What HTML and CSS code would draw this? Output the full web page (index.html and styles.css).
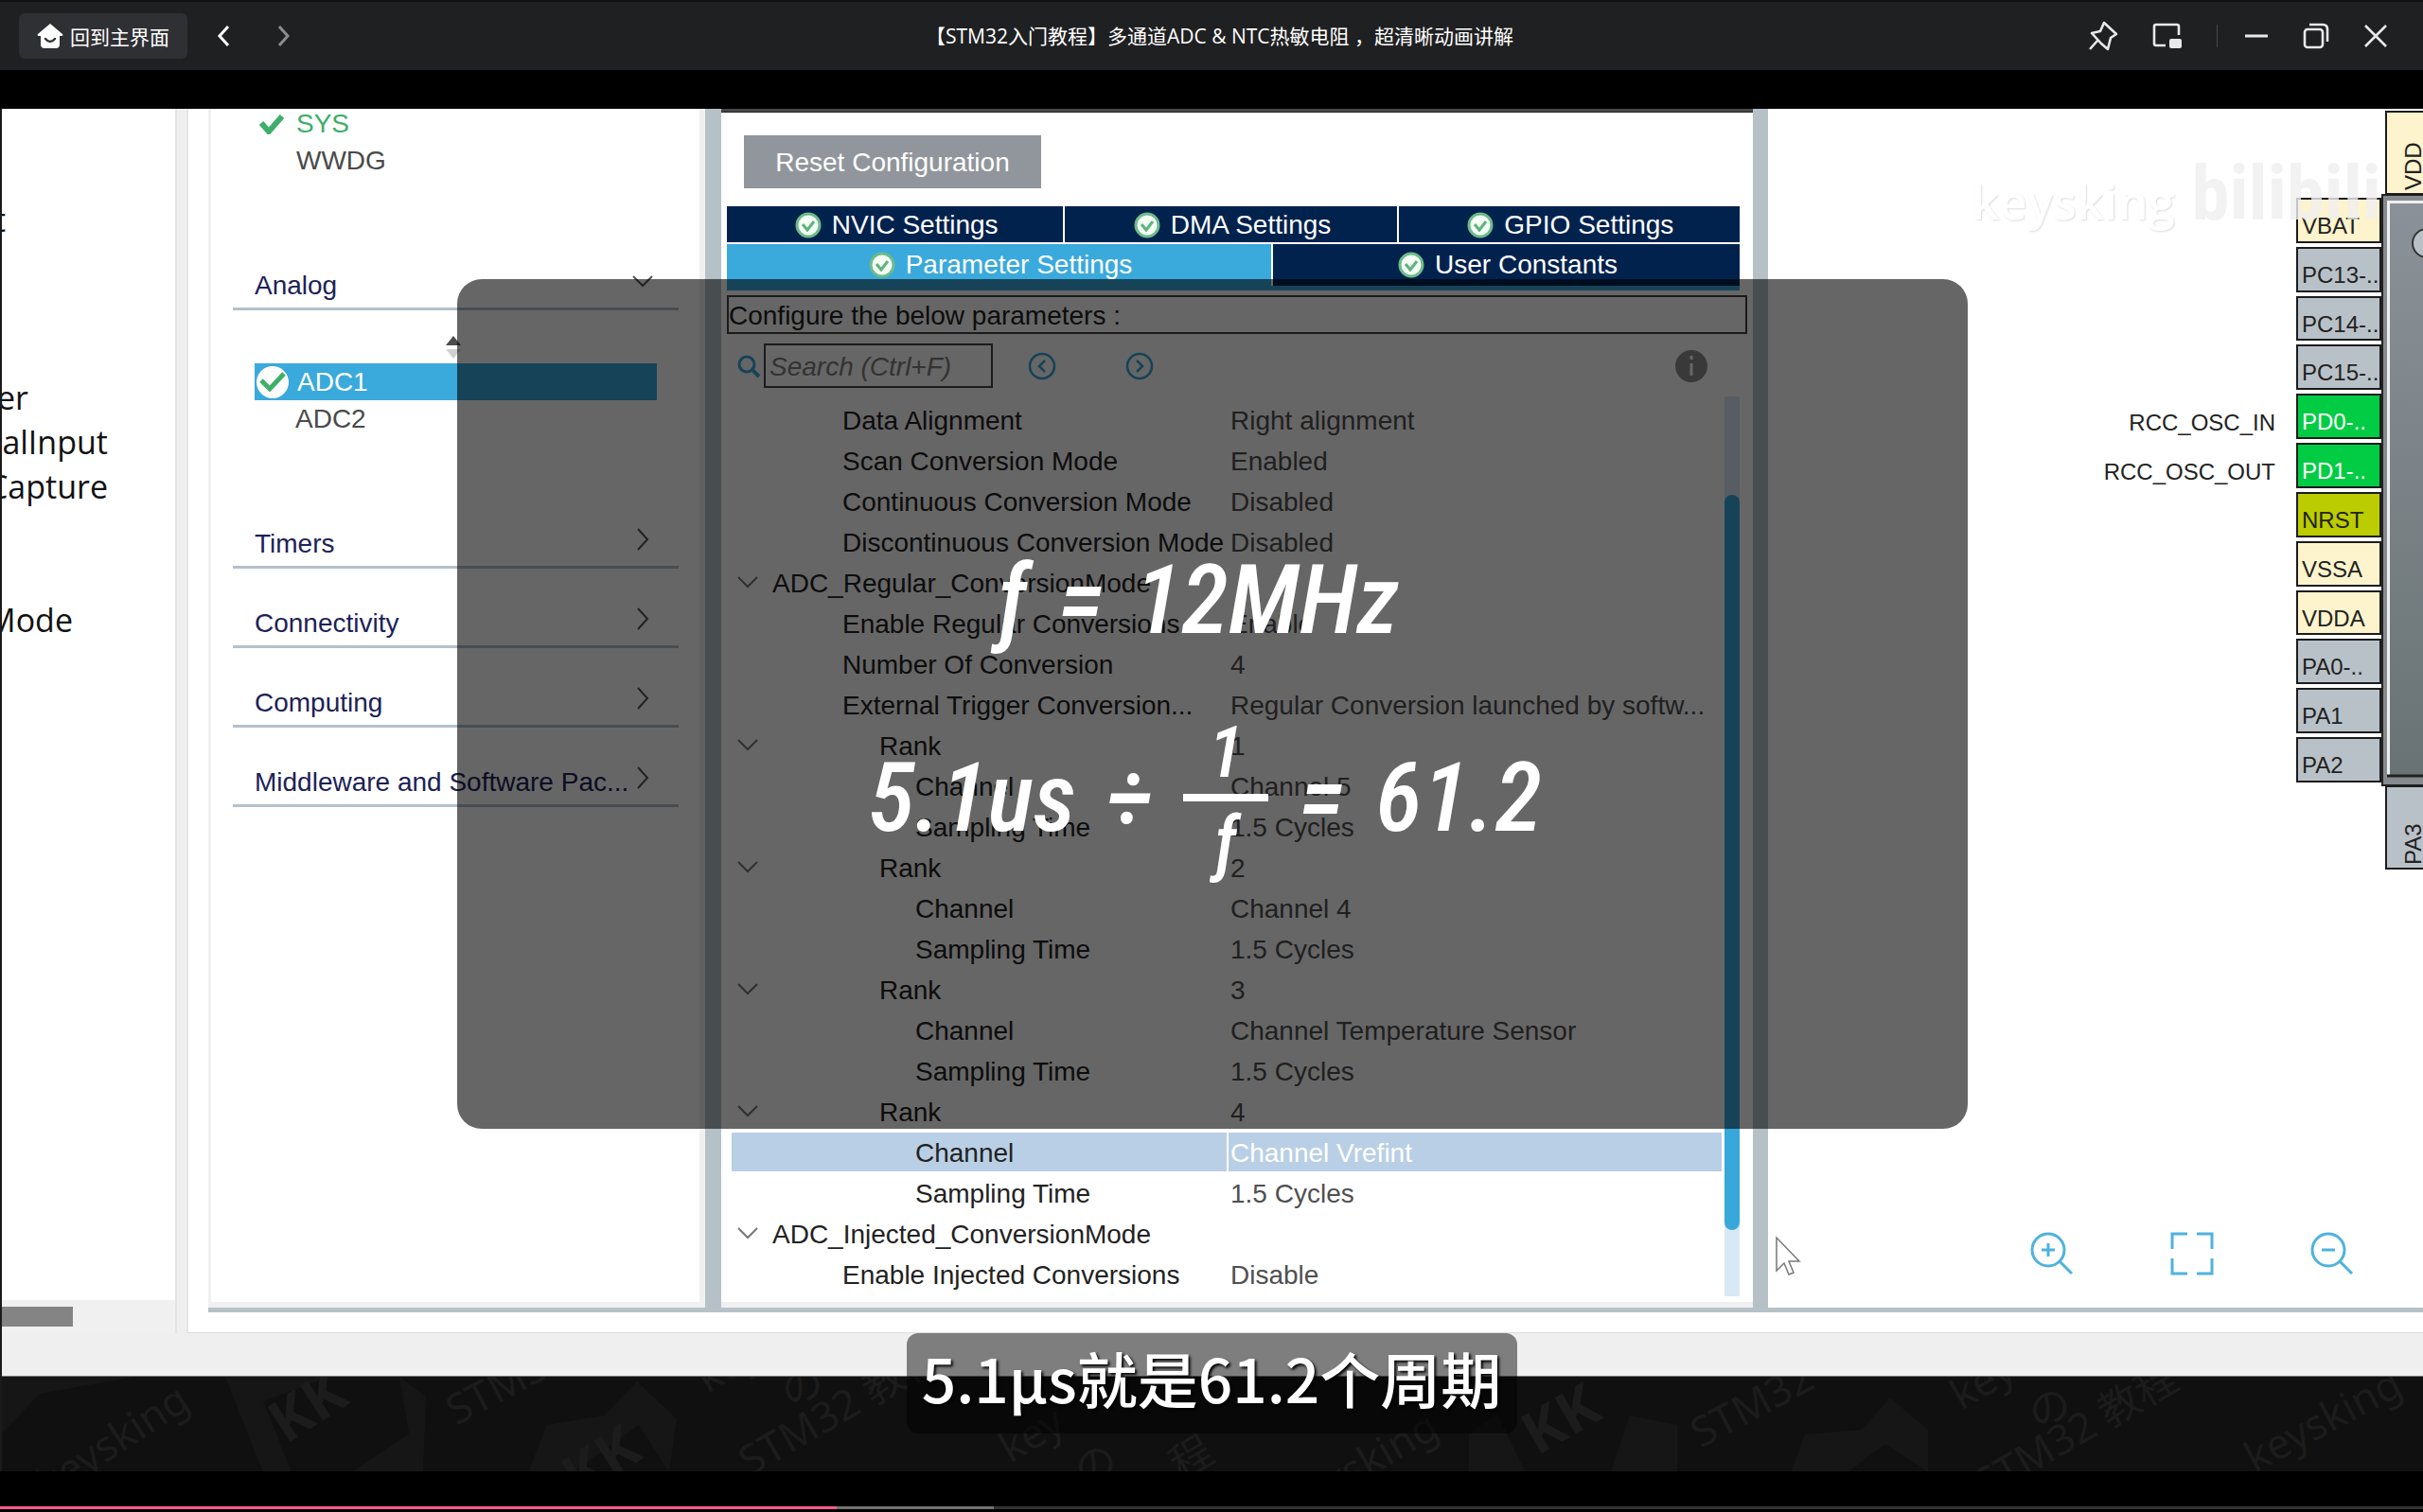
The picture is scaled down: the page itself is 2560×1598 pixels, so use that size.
FILE: index.html
```html
<!DOCTYPE html>
<html lang="zh-CN">
<head>
<meta charset="utf-8">
<title>【STM32入门教程】多通道ADC &amp; NTC热敏电阻</title>
<link rel="stylesheet" href="styles.css">
</head>
<body>
<svg class="defs" aria-hidden="true">
  <symbol id="down" viewBox="0 0 24 14"><path d="M2 2l10 10L22 2" fill="none" stroke="currentColor" stroke-width="2"/></symbol>
  <symbol id="right" viewBox="0 0 14 24"><path d="M2 1l10 11L2 23" fill="none" stroke="currentColor" stroke-width="2"/></symbol>
  <symbol id="ok" viewBox="0 0 28 28"><circle cx="14" cy="14" r="12" fill="#f4fff4" stroke="#6dbb8b" stroke-width="3"/><path d="M8 13l5 6 7-9" fill="none" stroke="#5fb37e" stroke-width="3"/></symbol>
  <symbol id="tick" viewBox="0 0 28 22"><path d="M3 10l8 9L25 3" fill="none" stroke="#3fae6b" stroke-width="6"/></symbol>
</svg>

<header class="titlebar">
  <div class="nav">
    <button class="home" type="button">
      <svg width="28" height="28" viewBox="0 0 28 28"><path d="M14 1L1 12c-1 1 0 2 1 2h2v9q0 4 4 4h12q4 0 4-4v-9h2c1 0 2-1 1-2z" fill="#fff"/><path d="M9 17q5 6 10 0" fill="none" stroke="#2f3034" stroke-width="2.5" stroke-linecap="round"/></svg>
      回到主界面
    </button>
    <button class="icon-button" type="button" aria-label="后退"><svg width="14" height="22" viewBox="0 0 14 22"><path d="M12 1L3 11l9 10" fill="none" stroke="#fff" stroke-width="3"/></svg></button>
    <button class="icon-button" type="button" aria-label="前进"><svg width="14" height="22" viewBox="0 0 14 22"><path d="M2 1l9 10-9 10" fill="none" stroke="#8b8c8e" stroke-width="3"/></svg></button>
  </div>
  <h1>【STM32入门教程】多通道ADC &amp; NTC热敏电阻 ，超清晰动画讲解</h1>
  <div class="window-buttons">
    <button class="icon-button" type="button" aria-label="置顶"><svg width="32" height="32" viewBox="0 0 32 32"><path d="M17 2l13 12-6 4-3 12-7-6-10-11 9-2zM10 21L2 30" fill="none" stroke="#e8e9ea" stroke-width="2.6" stroke-linejoin="round"/></svg></button>
    <button class="icon-button" type="button" aria-label="小窗"><svg width="32" height="28" viewBox="0 0 32 28"><path d="M14 24H4q-2 0-2-2V4q0-2 2-2h22q2 0 2 2v9" fill="none" stroke="#e8e9ea" stroke-width="2.6"/><rect x="18" y="17" width="13" height="10" rx="2" fill="#e8e9ea"/></svg></button>
    <span class="separator"></span>
    <button class="icon-button" type="button" aria-label="最小化"><svg width="26" height="28" viewBox="0 0 26 28"><path d="M1 14h24" stroke="#e8e9ea" stroke-width="3"/></svg></button>
    <button class="icon-button" type="button" aria-label="还原"><svg width="28" height="28" viewBox="0 0 28 28"><rect x="2" y="7" width="19" height="19" rx="3" fill="none" stroke="#e8e9ea" stroke-width="2.6"/><path d="M7 2h14q5 0 5 5v13" fill="none" stroke="#e8e9ea" stroke-width="2.6"/></svg></button>
    <button class="icon-button" type="button" aria-label="关闭"><svg width="26" height="26" viewBox="0 0 26 26"><path d="M2 2l22 22M24 2L2 24" stroke="#e8e9ea" stroke-width="2.6"/></svg></button>
  </div>
</header>

<main class="player">
  <section class="video">
    <div class="desktop">
      <aside class="listing">
        <div class="listing-text">
          <p class="cut-t">t</p><p></p><p></p><p></p>
          <p class="cut-er">er</p><p class="cut-input">alInput</p><p class="cut-capture">Capture</p><p></p><p></p><p class="cut-mode">Mode</p>
        </div>
        <div class="listing-scroll"><span></span></div>
      </aside>

      <div class="ide">
        <div class="ide-panes">
          <nav class="tree">
            <ul class="system">
              <li class="enabled"><svg width="28" height="22"><use href="#tick"/></svg>SYS</li>
              <li>WWDG</li>
            </ul>
            <button class="category analog" type="button">Analog<svg class="down" width="24" height="14"><use href="#down"/></svg></button>
            <svg class="sorter" width="18" height="24" viewBox="0 0 18 24"><path d="M1 10l8-10 8 10z" fill="#4c4c4c"/><path d="M1 14l8 10 8-10z" fill="#d0d0d0"/></svg>
            <ul class="adc">
              <li class="selected"><svg width="36" height="36" viewBox="0 0 36 36"><circle cx="18" cy="18" r="17" fill="#fff"/><path d="M6 16l9 9L30 9" fill="none" stroke="#3fae6b" stroke-width="5"/></svg>ADC1</li>
              <li>ADC2</li>
            </ul>
            <button class="category" type="button">Timers<svg width="14" height="24"><use href="#right"/></svg></button>
            <button class="category" type="button">Connectivity<svg width="14" height="24"><use href="#right"/></svg></button>
            <button class="category" type="button">Computing<svg width="14" height="24"><use href="#right"/></svg></button>
            <button class="category" type="button">Middleware and Software Pac...<svg width="14" height="24"><use href="#right"/></svg></button>
          </nav>

          <section class="config">
            <div class="config-head"></div>
            <button class="reset" type="button">Reset Configuration</button>
            <div class="tabs upper">
              <button type="button"><svg width="28" height="28"><use href="#ok"/></svg>NVIC Settings</button>
              <button type="button"><svg width="28" height="28"><use href="#ok"/></svg>DMA Settings</button>
              <button type="button"><svg width="28" height="28"><use href="#ok"/></svg>GPIO Settings</button>
            </div>
            <div class="tabs lower">
              <button class="active" type="button"><svg width="28" height="28"><use href="#ok"/></svg>Parameter Settings</button>
              <button type="button"><svg width="28" height="28"><use href="#ok"/></svg>User Constants</button>
            </div>
            <p class="hint">Configure the below parameters :</p>
            <div class="search">
              <label for="find"><svg width="26" height="26" viewBox="0 0 26 26"><circle cx="11" cy="11" r="8" fill="none" stroke="#38a8da" stroke-width="3"/><path d="M17 17l7 7" stroke="#38a8da" stroke-width="4"/></svg></label>
              <input id="find" type="text" placeholder="Search (Ctrl+F)">
              <button class="icon-button" type="button" aria-label="Previous"><svg width="30" height="30" viewBox="0 0 30 30" fill="none" stroke="#38a8da" stroke-width="2.6"><circle cx="15" cy="15" r="13"/><path d="M18 9l-6 6 6 6"/></svg></button>
              <button class="icon-button" type="button" aria-label="Next"><svg width="30" height="30" viewBox="0 0 30 30" fill="none" stroke="#38a8da" stroke-width="2.6"><circle cx="15" cy="15" r="13"/><path d="M12 9l6 6-6 6"/></svg></button>
              <button class="icon-button info" type="button" aria-label="Information"><svg width="34" height="34" viewBox="0 0 34 34"><circle cx="17" cy="17" r="17" fill="#8f8f8f"/><path d="M17 14v13M17 6v4" stroke="#fff" stroke-width="3"/></svg></button>
            </div>
            <div class="params">
              <table>
                <tbody>
                <tr><th class="item">Data Alignment</th><td>Right alignment</td></tr>
                <tr><th class="item">Scan Conversion Mode</th><td>Enabled</td></tr>
                <tr><th class="item">Continuous Conversion Mode</th><td>Disabled</td></tr>
                <tr><th class="item">Discontinuous Conversion Mode</th><td>Disabled</td></tr>
                <tr><th class="group"><svg width="24" height="14"><use href="#down"/></svg>ADC_Regular_ConversionMode</th><td></td></tr>
                <tr><th class="item">Enable Regular Conversions</th><td>Enable</td></tr>
                <tr><th class="item">Number Of Conversion</th><td>4</td></tr>
                <tr><th class="item">External Trigger Conversion...</th><td>Regular Conversion launched by softw...</td></tr>
                <tr><th class="rank"><svg width="24" height="14"><use href="#down"/></svg>Rank</th><td>1</td></tr>
                <tr><th class="leaf">Channel</th><td>Channel 5</td></tr>
                <tr><th class="leaf">Sampling Time</th><td>1.5 Cycles</td></tr>
                <tr><th class="rank"><svg width="24" height="14"><use href="#down"/></svg>Rank</th><td>2</td></tr>
                <tr><th class="leaf">Channel</th><td>Channel 4</td></tr>
                <tr><th class="leaf">Sampling Time</th><td>1.5 Cycles</td></tr>
                <tr><th class="rank"><svg width="24" height="14"><use href="#down"/></svg>Rank</th><td>3</td></tr>
                <tr><th class="leaf">Channel</th><td>Channel Temperature Sensor</td></tr>
                <tr><th class="leaf">Sampling Time</th><td>1.5 Cycles</td></tr>
                <tr><th class="rank"><svg width="24" height="14"><use href="#down"/></svg>Rank</th><td>4</td></tr>
                <tr class="current"><th class="leaf">Channel</th><td>Channel Vrefint</td></tr>
                <tr><th class="leaf">Sampling Time</th><td>1.5 Cycles</td></tr>
                <tr><th class="group"><svg width="24" height="14"><use href="#down"/></svg>ADC_Injected_ConversionMode</th><td></td></tr>
                <tr><th class="item">Enable Injected Conversions</th><td>Disable</td></tr>
                </tbody>
              </table>
              <div class="scrollbar"><span></span></div>
            </div>
          </section>

          <section class="pinout">
            <div class="chip"><svg width="46" height="626" viewBox="0 0 46 626"><defs><linearGradient id="body" x1="0" y1="0" x2="0" y2="1"><stop offset="0" stop-color="#8b9198"/><stop offset="1" stop-color="#697375"/></linearGradient></defs><rect width="60" height="626" fill="#222"/><rect x="2" y="2" width="60" height="622" fill="#858a8f"/><rect x="6" y="7" width="60" height="608" fill="#eee"/><rect x="9" y="10" width="60" height="604" fill="url(#body)"/><path d="M6 615h40" stroke="#222" stroke-width="3"/><circle cx="48" cy="52" r="15" fill="#b9c1c7" stroke="#333" stroke-width="2"/></svg></div>
            <div class="pin-top">VDD</div>
            <div class="pin-bottom">PA3</div>
            <div class="pins">
              <span></span><b class="power">VBAT</b>
              <span></span><b>PC13-..</b>
              <span></span><b>PC14-..</b>
              <span></span><b>PC15-..</b>
              <span>RCC_OSC_IN</span><b class="used">PD0-..</b>
              <span>RCC_OSC_OUT</span><b class="used">PD1-..</b>
              <span></span><b class="reset-pin">NRST</b>
              <span></span><b class="power">VSSA</b>
              <span></span><b class="power">VDDA</b>
              <span></span><b>PA0-..</b>
              <span></span><b>PA1</b>
              <span></span><b>PA2</b>
            </div>
            <div class="zoom">
              <button class="icon-button" type="button" aria-label="Zoom in"><svg width="46" height="46" viewBox="0 0 46 46" fill="none" stroke="#4fb2dc" stroke-width="3"><circle cx="19" cy="19" r="17"/><path d="M31 31l13 13M12 19h14M19 12v14"/></svg></button>
              <button class="icon-button" type="button" aria-label="Fit"><svg width="46" height="46" viewBox="0 0 46 46" fill="none" stroke="#4fb2dc" stroke-width="3"><path d="M2 18V2h16M28 2h16v16M44 28v16H28M18 44H2V28"/></svg></button>
              <button class="icon-button" type="button" aria-label="Zoom out"><svg width="46" height="46" viewBox="0 0 46 46" fill="none" stroke="#4fb2dc" stroke-width="3"><circle cx="19" cy="19" r="17"/><path d="M31 31l13 13M12 19h14"/></svg></button>
            </div>
            <svg class="cursor" width="28" height="44" viewBox="0 0 28 44"><path d="M2 2v35l8-8 5 12 5-2-5-12h11z" fill="#fff" stroke="#777" stroke-width="1.5"/></svg>
          </section>
        </div>
      </div>
    </div>

    <svg class="backdrop" width="100%" height="100" aria-hidden="true">
      <g fill="#161616">
        <path d="M0 60L40 18 140 0H0zM236 0l40 101h30l-30-75 70-26zM420 0l10 60-60 41h75l3-80zM556 101l20-50 60-10 35-36 42 40-8 56-32-50-70 50zM1550 60l30-20 30 61h-60zM1700 101l20-60 50 10v50zM1890 101l15-40 60-5 30-34 40 34v45l-45-30-40 30z"/>
      </g>
      <g class="marks">
        <text transform="translate(50 130) rotate(-33)">keysking</text>
        <text class="kk" transform="translate(300 72) rotate(-33)">KK</text>
        <text transform="translate(480 52) rotate(-28)">STM32 教程</text>
        <text class="kk" transform="translate(610 130) rotate(-33)">KK</text>
        <text transform="translate(790 106) rotate(-30)">STM32 教程</text>
        <text transform="translate(745 18) rotate(-30)">key</text>
        <text transform="translate(830 32) rotate(-20)">の</text>
        <text transform="translate(1065 92) rotate(-30)">key</text>
        <text transform="translate(1140 115) rotate(-20)">の</text>
        <text transform="translate(1245 110) rotate(-30)">程</text>
        <text transform="translate(1365 152) rotate(-30)">keysking</text>
        <text class="kk" transform="translate(1622 84) rotate(-30)">KK</text>
        <text transform="translate(1795 76) rotate(-28)">STM32</text>
        <text transform="translate(2070 36) rotate(-30)">key</text>
        <text transform="translate(2148 55) rotate(-20)">の</text>
        <text transform="translate(2096 130) rotate(-30)">STM32 教程</text>
        <text transform="translate(2380 102) rotate(-28)">keysking</text>
      </g>
    </svg>

    <div class="watermark"><span class="author">keysking</span><span class="site">bilibili</span></div>

    <div class="formula">
      <p><i>ƒ</i><span>=</span><span>12MHz</span></p>
      <p class="second"><span>5.1us</span><span>÷</span><span class="fraction"><span>1</span><i>ƒ</i></span><span>=</span><span>61.2</span></p>
    </div>

    <p class="subtitle">5.1μs就是61.2个周期</p>
  </section>
  <div class="progress"><div class="buffered"></div><div class="played"></div></div>
</main>
</body>
</html>
```
FILE: styles.css
```css
* { box-sizing: border-box; }
body {
  margin: 0;
  min-height: 100vh;
  display: flex;
  flex-direction: column;
  background: #000;
  font: 28px "Liberation Sans", sans-serif;
  overflow-x: hidden;
}
p, h1, ul { margin: 0; padding: 0; }
ul { list-style: none; }
svg { display: block; flex: none; }
button { border: 0; padding: 0; background: none; font: inherit; color: inherit; }
.defs { display: none; }
.icon-button { display: grid; place-items: center; }

/* Title bar */
.titlebar {
  display: grid;
  grid-template-columns: 1fr auto 1fr;
  align-items: center;
  height: 74px;
  padding: 0 37px 0 20px;
  border-top: 2px solid #101112;
  background: #1f2022;
  color: #fff;
}
.titlebar h1 { padding-left: 34px; font: 21px/30px "Open Sans", "Noto Sans CJK SC", sans-serif; }
.nav, .window-buttons { display: flex; align-items: center; }
.nav { padding-bottom: 1px; }
.home {
  display: flex;
  align-items: center;
  gap: 7px;
  height: 48px;
  padding: 0 19px;
  margin-right: 31px;
  border-radius: 6px;
  background: #2f3034;
  font: 21px "Noto Sans CJK SC", sans-serif;
}
.nav .icon-button + .icon-button { margin-left: 50px; }
.window-buttons { justify-content: flex-end; gap: 36px; }
.window-buttons .separator { width: 1px; height: 24px; margin-right: -8px; background: #47484a; }

/* Video */
.player { display: flex; flex-direction: column; flex: 1; }
.video { position: relative; margin-top: 41px; overflow: hidden; border-left: 2px solid #1b1b1b; }
.desktop { display: flex; background: #efefef; padding-bottom: 45px; border-bottom: 1px solid #777; }

.listing { display: flex; flex-direction: column; width: 185px; background: #fff; border-right: 2px solid #e4e4e4; overflow: hidden; }
.listing-text { flex: 1; padding-top: 93px; font: 34px/48px "Open Sans", sans-serif; color: #111; }
.listing-text p { display: flex; justify-content: flex-end; height: 47px; }
.cut-t { width: 4px; }
.cut-er { width: 28px; }
.cut-input { width: 112px; }
.cut-capture { width: 112px; }
.cut-mode { width: 75px; }
.listing-scroll { height: 35px; padding-top: 7px; background: #f0f0f0; }
.listing-scroll span { display: block; width: 75px; height: 21px; background: #848484; }

.ide { flex: 1; min-width: 0; margin-left: 10px; padding: 0 0 21px 21px; background: #fff; border-left: 2px solid #e6e6e6; border-bottom: 1px solid #ddd; }
.ide-panes { display: flex; border-bottom: 5px solid #b5c1c7; }

/* Peripheral tree */
.tree { display: flex; flex-direction: column; width: 525px; padding: 0 22px 0 23px; border: solid #f0f0f0; border-width: 0 6px 6px 3px; color: #4a4a4a; }
.tree li { display: flex; align-items: center; height: 39px; padding: 1px 0 0 67px; }
.system { height: 168px; margin-top: -4px; padding-bottom: 1px; }
.tree .enabled { gap: 12px; padding-left: 27px; color: #3fae6b; }
.category { display: flex; align-items: center; justify-content: space-between; height: 84px; padding: 34px 31px 0 23px; border-bottom: 3px solid #b5c1cc; color: #1c2258; text-align: left; }
.category svg { margin-top: -10px; color: #555; }
.category .down { margin-right: -5px; }
.analog { height: 49px; margin-bottom: 27px; padding-top: 0; }
.sorter { margin-left: 224px; }
.adc { margin: 5px 23px 55px; }
.tree .adc li { padding-left: 43px; }
.tree .adc .selected { gap: 8px; padding: 1px 0 0 1px; background: #3aa9dc; color: #fff; }

/* Configuration pane */
.config { width: 1123px; padding: 0 6px 12px; border: solid #b5c1c7; border-width: 0 16px 0 17px; box-shadow: inset 0 -6px #f0f0f0; background: #fff; color: #222; }
.config-head { height: 4px; margin: 0 -6px; background: #48484a; border-bottom: 1px solid #1e1e1e; }
.reset { display: block; width: 314px; height: 56px; margin: 24px 0 19px 18px; padding-top: 2px; background: #91969c; color: #fff; }
.tabs { display: grid; gap: 2px; margin-right: 8px; color: #fff; }
.tabs button { display: flex; align-items: center; justify-content: center; gap: 11px; height: 38px; padding: 2px 0 0 3px; background: #02224e; }
.upper { grid-template-columns: 355fr 350fr 360fr; margin-bottom: 2px; }
.lower { grid-template-columns: 575fr 493fr; margin-bottom: 5px; border-bottom: 5px solid #38a8da; }
.lower button { height: 44px; padding-top: 0; }
.tabs .active { background: #3aa9dc; }
.hint { height: 41px; border: 2px solid #444; line-height: 40px; }
.search { display: flex; align-items: center; margin-top: 10px; padding: 0 42px 0 10px; }
.search label { margin-right: 3px; }
.search input { width: 242px; height: 47px; margin-right: 37px; border: 2px solid #444; padding: 2px 4px 0; background: #fff; font: italic 28px "Liberation Sans", sans-serif; }
.search input::placeholder { color: #808080; opacity: 1; }
.search .icon-button + .icon-button { margin-left: 73px; }
.search .icon-button.info { margin-left: auto; }

.params { display: flex; gap: 3px; margin: 9px 8px 0 5px; }
.params table { flex: 1; table-layout: fixed; border-spacing: 0; margin: 3px 0 2px; }
.params tr { height: 43px; }
.params th, .params td { position: relative; height: 43px; padding: 2px 0 0; font-weight: 400; line-height: 32px; text-align: left; white-space: nowrap; border: solid #fff; border-width: 1px 0; }
.params th { width: 525px; border-right: 2px solid #fff; }
.params td { padding-left: 2px; color: #505050; }
.params svg { position: absolute; left: 5px; top: 13px; color: #777; }
.params .item { padding-left: 117px; }
.params .group { padding-left: 43px; }
.params .rank { padding-left: 156px; }
.params .leaf { padding-left: 194px; }
.current th, .current td { background: #b9cfe5; background-clip: padding-box; }
.params .current td { color: #fff; }
.scrollbar { width: 16px; padding-top: 104px; background: #d9e8f5; }
.scrollbar span { display: block; height: 777px; border-radius: 8px; background: #38a8da; }

/* Pinout canvas */
.pinout { position: relative; display: flex; flex-direction: column; flex: 1; min-width: 0; padding-top: 94px; background: #fff; font-size: 24px; color: #222; }
.pins { display: grid; grid-template-columns: 1fr 90px; grid-auto-rows: 1fr; gap: 4px 22px; height: 618px; margin-right: 44px; text-align: right; }
.pins span { align-self: center; padding-top: 14px; }
.pins b { padding: 15px 0 0 4px; border: 2px solid #1c1c1c; background: #b9c1c8; font-weight: 400; text-align: left; line-height: 26px; }
.pins .power { background: #fdf4cd; }
.pins .used { background: #02cc44; color: #fff; }
.pins .reset-pin { background: #bbcc00; }
.chip { position: absolute; right: 0; top: 90px; width: 44px; overflow: hidden; }
.pin-top, .pin-bottom { position: absolute; right: 0; width: 40px; height: 89px; border: solid #1c1c1c; border-width: 2px 2px 2px 0; padding: 3px 15px 0 0; writing-mode: vertical-rl; transform: rotate(180deg); line-height: 26px; }
.pin-top { top: 2px; background: #fdf4cd; }
.pin-bottom { top: 715px; background: #b9c1c8; }
.zoom { display: flex; justify-content: flex-end; gap: 102px; margin: auto 73px 34px 0; }
.cursor { position: absolute; left: 7px; bottom: 32px; }

.backdrop { background: #101010; }
.marks { fill: #1c1c1c; font: 44px "Noto Sans", "Noto Sans CJK SC", sans-serif; }
.kk { font-size: 62px; font-weight: 700; }

/* Overlays */
.watermark { position: absolute; top: 44px; right: 44px; display: flex; align-items: center; gap: 18px; }
.author { padding-top: 16px; color: #fff; font: 600 51px/60px "Open Sans", sans-serif; text-shadow: 1px 1px 2px #ddd; }
.site { color: #efefefcc; font: 700 80px/90px "Roboto Condensed", Roboto, sans-serif; }

.formula { position: absolute; top: 180px; left: 0; right: 0; width: 1596px; height: 898px; margin: 0 auto; border-radius: 26px; background: #0009; color: #fff; font: italic 500 102px/130px "Roboto Condensed", Roboto, sans-serif; }
.formula p { display: flex; justify-content: center; align-items: center; gap: 32px; padding: 274px 30px 0 0; }
.formula .second { gap: 32px; padding: 52px 16px 0 0; }
.fraction { display: flex; flex-direction: column; width: 90px; text-align: center; font-size: 76px; line-height: 88px; }
.fraction span { border-bottom: 8px solid #fff; }

.subtitle { position: absolute; left: 0; right: 2px; bottom: 40px; width: 645px; height: 106px; margin: 0 auto; border-radius: 12px; background: #00000078; color: #fff; font: 500 64px/92px "Noto Sans CJK SC", sans-serif; text-align: center; text-shadow: 2px 2px 3px #000; }

.progress { position: relative; height: 3px; margin: auto 0 3px; background: #333; }
.buffered, .played { position: absolute; inset: 0 auto 0 0; }
.buffered { width: 41%; background: #737373; }
.played { width: 884px; background: #fb5b8f; }
```
